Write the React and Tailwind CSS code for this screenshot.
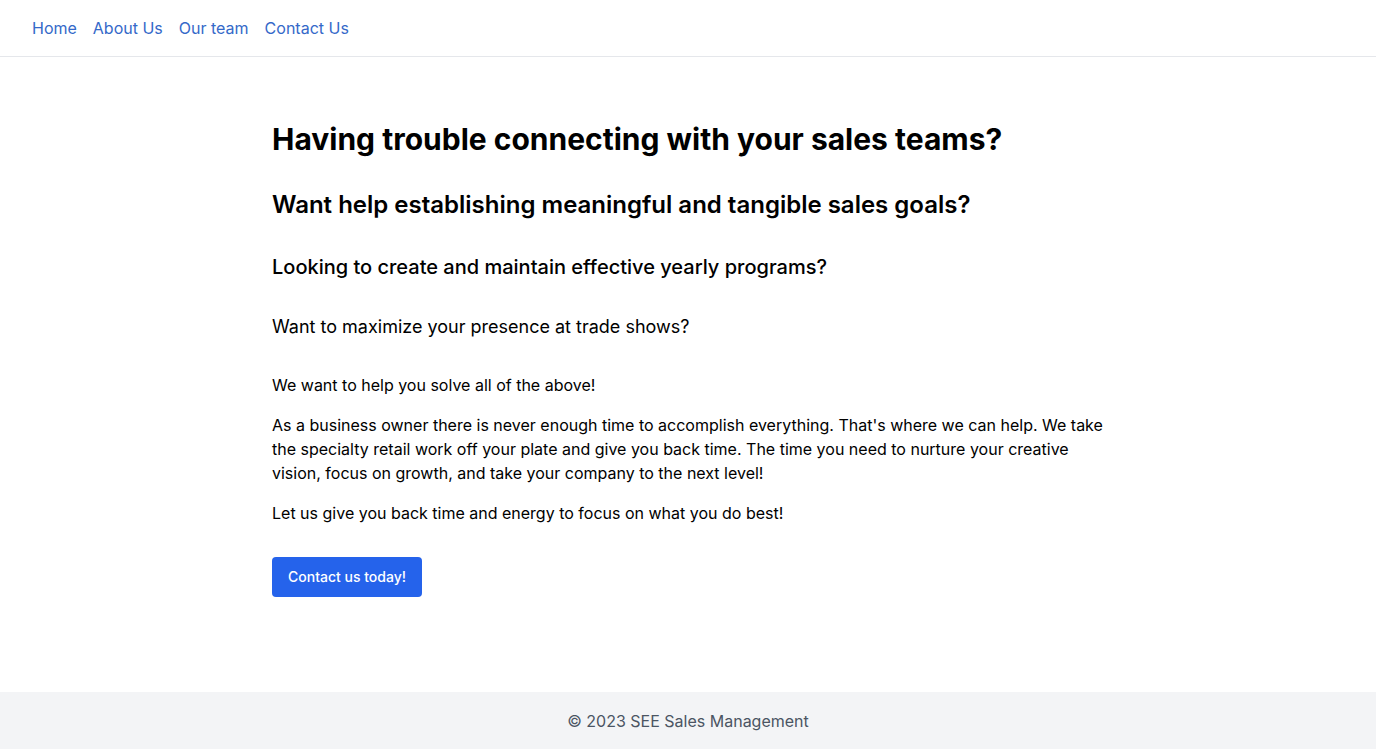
import React from 'react';

/**
 * Landing page for SEE Sales Management
 * Simple nav, stacked questions, call to action and footer
 */
const links = ['Home', 'About Us', 'Our team', 'Contact Us'];

export default function App() {
  return (
    <div className="min-h-screen flex flex-col bg-white text-black font-['Inter',sans-serif]">
      <nav className="border-b border-[#e5e7eb] px-8 py-4">
        <ul className="flex gap-4 text-base">
          {links.map((l) => (
            <li key={l}>
              <a href="#" className="text-[#3469c9]">
                {l}
              </a>
            </li>
          ))}
        </ul>
      </nav>

      <main className="flex-1 py-16">
        <div className="max-w-4xl mx-auto px-8">
          <h1 className="text-3xl font-bold mb-8">Having trouble connecting with your sales teams?</h1>
          <h2 className="text-2xl font-semibold mb-8">Want help establishing meaningful and tangible sales goals?</h2>
          <h3 className="text-xl font-medium mb-8">Looking to create and maintain effective yearly programs?</h3>
          <h4 className="text-lg mb-8">Want to maximize your presence at trade shows?</h4>
          <p className="text-base leading-6 mb-4">We want to help you solve all of the above!</p>
          <p className="text-base leading-6 mb-4">
            As a business owner there is never enough time to accomplish everything. That's where we can help. We take
            the specialty retail work off your plate and give you back time. The time you need to nurture your creative
            vision, focus on growth, and take your company to the next level!
          </p>
          <p className="text-base leading-6 mb-8">Let us give you back time and energy to focus on what you do best!</p>
          <button className="bg-[#2563eb] text-white text-sm font-medium px-4 py-2.5 rounded">Contact us today!</button>
        </div>
      </main>

      <footer className="bg-[#f3f4f6] pt-[17px] pb-4 text-center text-[#4b5563]">
        <p className="leading-6">© 2023 SEE Sales Management</p>
      </footer>
    </div>
  );
}
